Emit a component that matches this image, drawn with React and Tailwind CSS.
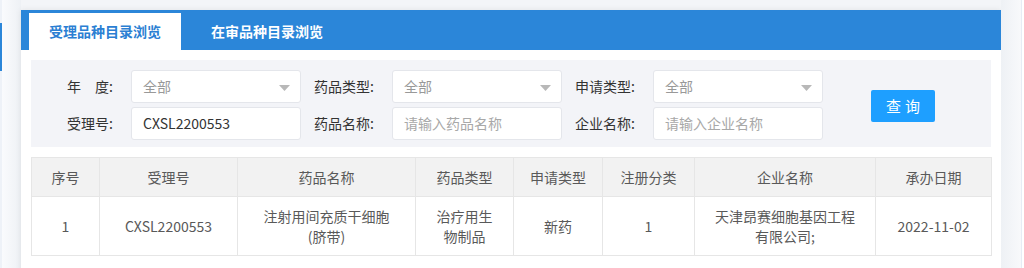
import React from "react";

const font = { fontFamily: '"Noto Sans CJK SC", "Noto Sans", sans-serif' };

function Arrow() {
  return (
    <svg width="11" height="6" viewBox="0 0 11 6" className="absolute right-[10px] top-[14px]">
      <path d="M0 0 L11 0 L5.5 6 Z" fill="#b8b8b8" />
    </svg>
  );
}

function Select({ value }) {
  return (
    <div className="relative w-[170px] h-full bg-white border border-[#e4e6eb] rounded-[3px] flex items-center pl-[11px] text-[14px] text-[#999]">
      {value}
      <Arrow />
    </div>
  );
}

function Input({ value, placeholder }) {
  return (
    <div className={`w-[170px] h-full bg-white border border-[#e4e6eb] rounded-[3px] flex items-center pl-[11px] text-[14px] ${value ? "text-[#333]" : "text-[#a8a8a8]"}`}>
      {value || placeholder}
    </div>
  );
}

function Label({ children, first }) {
  return (
    <div className={`w-[80px] ${first ? "" : "ml-[11px]"} text-right pr-[18px] text-[14px] text-[#333] flex items-center justify-end`}>
      {children}
    </div>
  );
}

const cols = [
  { t: "序号", w: 68 },
  { t: "受理号", w: 138 },
  { t: "药品名称", w: 178 },
  { t: "药品类型", w: 98 },
  { t: "申请类型", w: 89 },
  { t: "注册分类", w: 92 },
  { t: "企业名称", w: 181 },
  { t: "承办日期", w: 116 },
];

const row = [
  "1",
  "CXSL2200553",
  <>注射用间充质干细胞<br />(脐带)</>,
  <>治疗用生<br />物制品</>,
  "新药",
  "1",
  <>天津昂赛细胞基因工程<br />有限公司;</>,
  "2022-11-02",
];

export default function App() {
  return (
    <div className="w-[1024px] h-[268px] bg-[#f3f5f8] flex overflow-hidden" style={font}>
      <div className="w-[21px] h-full flex bg-gradient-to-r from-[#fbfcfe] to-[#eef1f5]">
        <div className="w-[2px] h-full flex flex-col bg-[#eef2f8]">
          <div className="h-[23px]" />
          <div className="h-[48px] bg-[#2b86d9]" />
        </div>
      </div>
      <div className="w-[980px] h-full mt-[10px] bg-white shadow-[0_0_6px_rgba(0,0,0,0.08)] flex flex-col">
        <div className="h-[40px] bg-[#2b86d9] flex items-end pl-[8px] gap-[10px]">
          <div className="w-[152px] h-[37px] bg-white flex items-center justify-center text-[14px] font-bold text-[#2b7fd3]">
            受理品种目录浏览
          </div>
          <div className="w-[152px] h-[37px] flex items-center justify-center text-[14px] font-bold text-white">
            在审品种目录浏览
          </div>
        </div>
        <div className="mx-[10px] mt-[10px] h-[87px] bg-[#f3f4f8] flex pl-[20px] pt-[10px] pb-[7px]">
          <div className="flex flex-col gap-[4px]">
            <div className="h-[33px] flex">
              <Label first>年　度:</Label>
              <Select value="全部" />
              <Label>药品类型:</Label>
              <Select value="全部" />
              <Label>申请类型:</Label>
              <Select value="全部" />
            </div>
            <div className="h-[33px] flex">
              <Label first>受理号:</Label>
              <Input value="CXSL2200553" />
              <Label>药品名称:</Label>
              <Input placeholder="请输入药品名称" />
              <Label>企业名称:</Label>
              <Input placeholder="请输入企业名称" />
            </div>
          </div>
          <div className="ml-[48px] self-center mt-[2px] w-[64px] h-[32px] bg-[#1e9fff] rounded-[2px] flex items-center justify-center text-white text-[15px] tracking-[4px] pl-[4px]">
            查询
          </div>
        </div>
        <table className="mx-[10px] mt-[10px] w-[960px] border-collapse table-fixed text-[14px] text-[#595959]">
          <colgroup>
            {cols.map((c, i) => (
              <col key={i} style={{ width: c.w }} />
            ))}
          </colgroup>
          <thead>
            <tr className="h-[39px] bg-[#f2f2f2]">
              {cols.map((c, i) => (
                <th key={i} className="border border-[#e6e6e6] font-normal text-center">
                  {c.t}
                </th>
              ))}
            </tr>
          </thead>
          <tbody>
            <tr className="h-[59px]">
              {row.map((v, i) => (
                <td key={i} className="border border-[#e6e6e6] text-center leading-[20px]">
                  {v}
                </td>
              ))}
            </tr>
          </tbody>
        </table>
      </div>
      <div className="w-[20px] h-full bg-gradient-to-r from-[#eef1f5] to-[#f8f9fb]" />
      <div className="w-[1px] h-full bg-[#e6ecf5]" />
      <div className="flex-1 h-full bg-white" />
    </div>
  );
}
